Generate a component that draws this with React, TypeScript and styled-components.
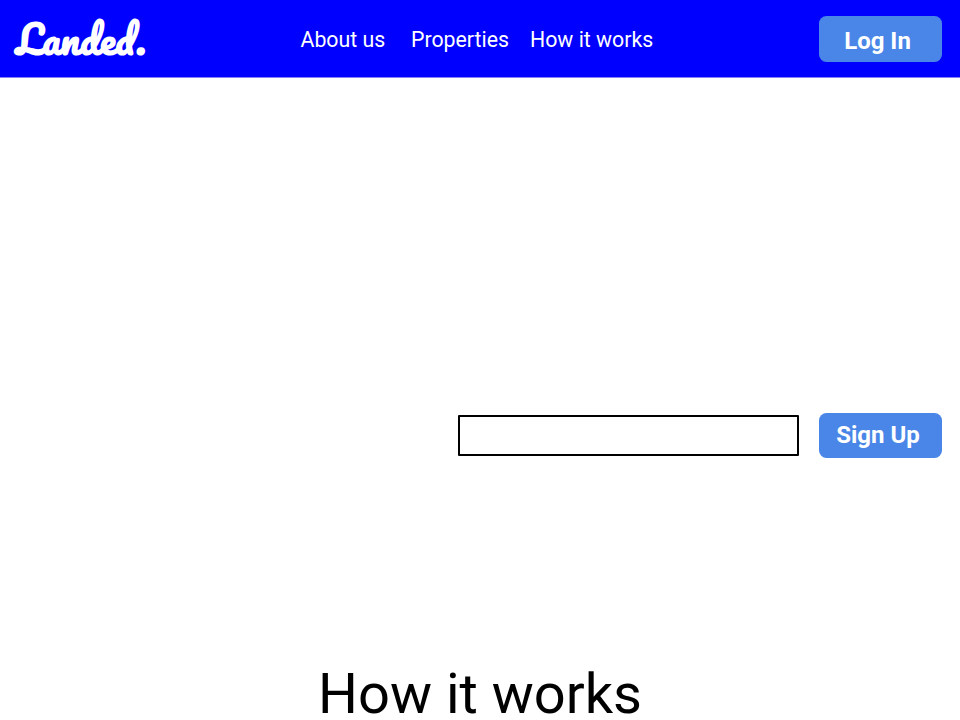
import React from "react";
import styled, { createGlobalStyle } from "styled-components";

const GlobalStyle = createGlobalStyle`
  * { box-sizing: border-box; }
  html, body { margin: 0; background: #fff; }
  body { overflow: hidden; font-family: Roboto, "Liberation Sans", sans-serif; color: #000; }
`;

const Page = styled.div`
  height: 720px;
  display: flex;
  flex-direction: column;
`;

const Header = styled.header`
  flex: none;
  height: 78px;
  display: grid;
  grid-template-columns: 300px 1fr 123px;
  align-items: center;
  padding-right: 18.5px;
  background: #0000ff;
  border-bottom: 1px solid #8a80f6;
`;

const Logo = styled.a`
  justify-self: start;
  margin-left: 16px;
  color: #fff;
  font: 700 39px/74px Pacifico, "Liberation Serif", cursive;
  white-space: nowrap;
`;

const Nav = styled.nav`
  display: flex;
  padding: 2px 0 0 0.5px;
`;

const NavLink = styled.a<{ $width: number }>`
  flex: none;
  width: ${(p) => p.$width}px;
  color: #fff;
  font-size: 21.3px;
  line-height: 26px;
  white-space: nowrap;
`;

const Button = styled.button<{ $height: number; $shift: number; $drop?: number }>`
  width: 123px;
  height: ${(p) => p.$height}px;
  padding: ${(p) => p.$drop ?? 0}px ${(p) => p.$shift}px 0 0;
  border: 0;
  border-radius: 7.5px;
  background: #4a86e8;
  color: #fff;
  font: 700 24px/28px Roboto, "Liberation Sans", sans-serif;
  white-space: nowrap;
`;

const Hero = styled.main`
  flex: none;
  height: 582.5px;
  display: flex;
  justify-content: flex-end;
  align-items: flex-start;
  padding: 334.5px 18.5px 0 0;
`;

const SignUpForm = styled.form`
  display: flex;
  align-items: center;
  gap: 20px;
`;

const EmailInput = styled.input`
  width: 341px;
  height: 41px;
  border: 2px solid #000;
  border-radius: 1px;
  background: #fff;
  outline: none;
`;

const Heading = styled.h1`
  margin: 0;
  text-align: center;
  font-size: 56px;
  font-weight: 400;
  line-height: 60px;
  padding-top: 3px;
  white-space: nowrap;
`;

const links = [
  { label: "About us", width: 110.5 },
  { label: "Properties", width: 119 },
  { label: "How it works", width: 125 },
];

export default function App() {
  return (
    <Page>
      <GlobalStyle />
      <Header>
        <Logo>Landed.</Logo>
        <Nav>
          {links.map((link) => (
            <NavLink key={link.label} $width={link.width}>
              {link.label}
            </NavLink>
          ))}
        </Nav>
        <Button $height={46} $shift={5} $drop={4}>Log In</Button>
      </Header>
      <Hero>
        <SignUpForm onSubmit={(e) => e.preventDefault()}>
          <EmailInput aria-label="Email" />
          <Button $height={45} $shift={4}>Sign Up</Button>
        </SignUpForm>
      </Hero>
      <Heading>How it works</Heading>
    </Page>
  );
}
